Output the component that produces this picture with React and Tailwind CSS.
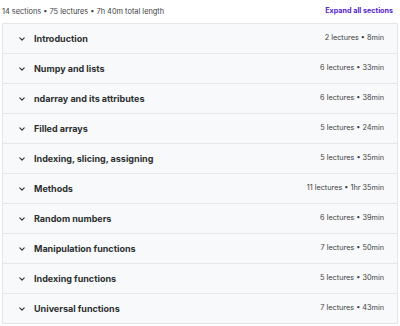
import React from "react";

const sections = [
  ["Introduction", "2 lectures • 8min"],
  ["Numpy and lists", "6 lectures • 33min"],
  ["ndarray and its attributes", "6 lectures • 38min"],
  ["Filled arrays", "5 lectures • 24min"],
  ["Indexing, slicing, assigning", "5 lectures • 35min"],
  ["Methods", "11 lectures • 1hr 35min"],
  ["Random numbers", "6 lectures • 39min"],
  ["Manipulation functions", "7 lectures • 50min"],
  ["Indexing functions", "5 lectures • 30min"],
  ["Universal functions", "7 lectures • 43min"],
];

function Chevron() {
  return (
    <svg width="6" height="6" viewBox="0 0 6 6" fill="none" className="shrink-0">
      <path d="M0.8 1.8 L3 4.1 L5.2 1.8" stroke="#2d2f31" strokeWidth="1.1" strokeLinecap="round" strokeLinejoin="round" />
    </svg>
  );
}

export default function App() {
  return (
    <div className="w-[400px] h-[326px] bg-white overflow-hidden text-[#2d2f31]" style={{ fontFamily: "Inter, 'Noto Sans', sans-serif" }}>
      <div className="flex items-center justify-between pl-[2px] pr-[7px] h-[23px]">
        <span className="text-[7.4px] text-[#3e4143]">14 sections • 75 lectures • 7h 40m total length</span>
        <span className="text-[7.2px] font-bold text-[#5624d0]">Expand all sections</span>
      </div>
      <div className="ml-[2px] w-[396px] border border-[#e4e7ea] border-b-0">
        {sections.map(([t, m]) => (
          <div key={t} className="h-[30px] flex items-center bg-[#f7f9fa] border-b border-[#e4e7ea] pl-[16px] pr-[13px]">
            <Chevron />
            <span className="ml-[9px] text-[9px] font-bold flex-1">{t}</span>
            <span className="text-[7.3px] text-[#3e4143]">{m}</span>
          </div>
        ))}
      </div>
    </div>
  );
}
